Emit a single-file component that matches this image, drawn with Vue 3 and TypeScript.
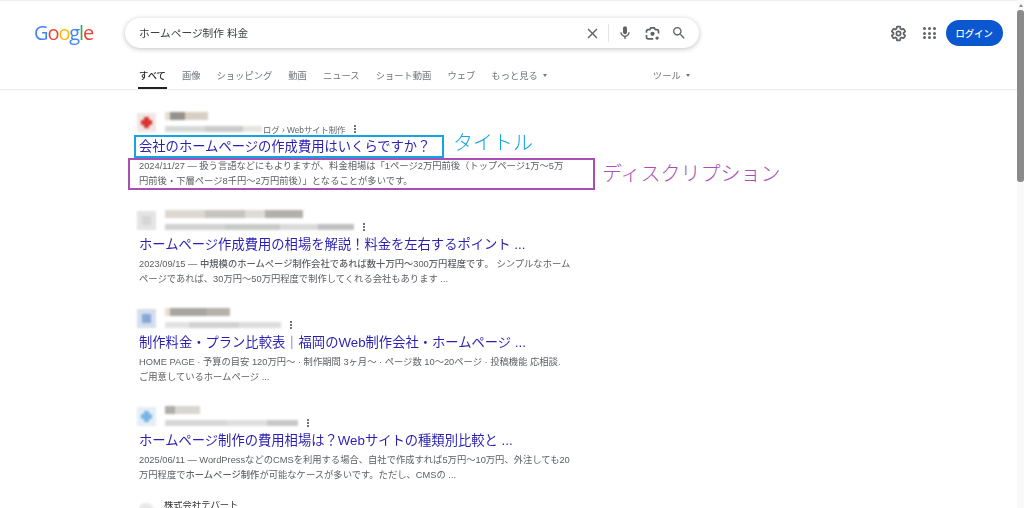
<script setup lang="ts">
type Part = { t: string; b?: boolean }
type Seg = { w: number; c: string }
interface Result {
  favicon: string[]
  cross: boolean
  name: Seg[]
  url: Seg[]
  crumb?: string
  title: string
  lines: Part[][]
}

const tabs = ['画像', 'ショッピング', '動画', 'ニュース', 'ショート動画', 'ウェブ']
const dots = Array.from({ length: 9 })

const results: Result[] = [
  {
    favicon: ['#f1e6e4', '#d8332f'],
    cross: true,
    name: [{ w: 5, c: '#e6ded4' }, { w: 15, c: '#96918c' }, { w: 23, c: '#d8cfc4' }],
    url: [{ w: 40, c: '#d4dada' }, { w: 38, c: '#cbcbcb' }, { w: 19, c: '#e6e4e0' }],
    crumb: 'ログ › Webサイト制作',
    title: '会社のホームページの作成費用はいくらですか？',
    lines: [
      [{ t: '2024/11/27 — 扱う言語などにもよりますが、料金相場は「1ページ2万円前後（トップページ1万〜5万' }],
      [{ t: '円前後・下層ページ8千円〜2万円前後）」となることが多いです。' }]
    ]
  },
  {
    favicon: ['#e4e4e4', '#d6d6d6'],
    cross: false,
    name: [{ w: 40, c: '#dcd8d0' }, { w: 40, c: '#c6c4bf' }, { w: 20, c: '#dedcd6' }, { w: 38, c: '#b2b0aa' }],
    url: [{ w: 60, c: '#d2d2d2' }, { w: 55, c: '#c8cac8' }, { w: 38, c: '#dadada' }, { w: 36, c: '#c0c0c0' }],
    title: 'ホームページ作成費用の相場を解説！料金を左右するポイント ...',
    lines: [
      [{ t: '2023/09/15 — ' }, { t: '中規模のホームページ制作会社であれば数十万円〜300万円程度です', b: true }, { t: '。 シンプルなホーム' }],
      [{ t: 'ページであれば、30万円〜50万円程度で制作してくれる会社もあります ...' }]
    ]
  },
  {
    favicon: ['#d4deec', '#86a8d8'],
    cross: false,
    name: [{ w: 5, c: '#e8ded2' }, { w: 37, c: '#a8a4a0' }, { w: 23, c: '#b6b2aa' }],
    url: [{ w: 24, c: '#e2e2e2' }, { w: 50, c: '#d0d2d0' }, { w: 42, c: '#dcdcdc' }],
    title: '制作料金・プラン比較表｜福岡のWeb制作会社・ホームページ ...',
    lines: [
      [{ t: 'HOME PAGE · 予算の目安 120万円〜 · 制作期間 3ヶ月〜 · ページ数 10〜20ページ · 投稿機能 応相談.' }],
      [{ t: 'ご用意しているホームページ ...' }]
    ]
  },
  {
    favicon: ['#e4eef6', '#78b4e6'],
    cross: true,
    name: [{ w: 10, c: '#b0aeaa' }, { w: 25, c: '#d8d6d0' }],
    url: [{ w: 62, c: '#d6d8d6' }, { w: 40, c: '#dedede' }, { w: 31, c: '#c8c8c8' }],
    title: 'ホームページ制作の費用相場は？Webサイトの種類別比較と ...',
    lines: [
      [{ t: '2025/06/11 — WordPressなどのCMSを利用する場合、自社で作成すれば5万円〜10万円、外注しても20' }],
      [{ t: '万円程度で' }, { t: 'ホームページ制作', b: true }, { t: 'が可能なケースが多いです。ただし、CMSの ...' }]
    ]
  }
]
</script>

<template>
  <div class="page">
    <div class="main">
      <header class="header">
        <div class="logo" aria-label="Google">
          <span class="lb">G</span><span class="lr">o</span><span class="ly">o</span><span class="lb">g</span><span class="lg">l</span><span class="lr">e</span>
        </div>
        <div class="search">
          <span class="query">ホームページ制作 料金</span>
          <svg class="ic close" viewBox="0 0 24 24"><path d="M19 6.410L17.590 5 12 10.590 6.410 5 5 6.410 10.590 12 5 17.590 6.410 19 12 13.410 17.590 19 19 17.590 13.410 12z" /></svg>
          <span class="sep"></span>
          <svg class="ic mic" viewBox="0 0 24 24"><path d="M12 14c1.660 0 3-1.340 3-3V5c0-1.660-1.340-3-3-3S9 3.340 9 5v6c0 1.660 1.340 3 3 3z" /><path d="M17 11c0 2.760-2.240 5-5 5s-5-2.240-5-5H5c0 3.530 2.610 6.430 6 6.920V21h2v-3.080c3.390-.49 6-3.390 6-6.920h-2z" /></svg>
          <svg class="ic lens" viewBox="0 0 24 24"><path d="M3.500 11V9a2.500 2.500 0 0 1 2.500-2.500h2L9.500 4h5L16 6.500h2A2.500 2.500 0 0 1 20.500 9v3M3.500 14v3A2.500 2.500 0 0 0 6 19.500h7" fill="none" stroke="#5f6368" stroke-width="2.400" /><circle cx="12" cy="12.500" r="3" /><circle cx="18.500" cy="18.500" r="2.400" /></svg>
          <svg class="ic find" viewBox="0 0 24 24"><path d="M15.500 14h-.79l-.28-.27C15.410 12.590 16 11.110 16 9.500 16 5.910 13.090 3 9.500 3S3 5.910 3 9.500 5.910 16 9.500 16c1.610 0 3.090-.59 4.230-1.570l.27.28v.79l5 4.990L20.490 19l-4.990-5zm-6 0C7.010 14 5 11.990 5 9.500S7.010 5 9.500 5 14 7.010 14 9.500 11.990 14 9.500 14z" /></svg>
        </div>
        <svg class="ic gear" viewBox="0 0 24 24"><path d="M19.140 12.940c.04-.3.060-.61.060-.94 0-.32-.02-.64-.07-.94l2.030-1.580c.18-.14.23-.41.120-.61l-1.920-3.320c-.12-.22-.37-.29-.59-.22l-2.390.96c-.5-.38-1.030-.7-1.620-.94l-.36-2.540c-.04-.24-.24-.41-.48-.41h-3.840c-.24 0-.43.170-.47.410l-.36 2.540c-.59.24-1.130.57-1.620.94l-2.390-.96c-.22-.08-.47 0-.59.22L2.740 8.870c-.12.21-.08.47.12.61l2.030 1.580c-.05.3-.09.63-.09.94s.02.64.07.94l-2.030 1.580c-.18.14-.23.41-.12.61l1.920 3.320c.12.22.37.29.59.22l2.390-.96c.5.38 1.030.7 1.620.94l.36 2.54c.05.24.24.41.48.41h3.840c.24 0 .44-.17.47-.41l.36-2.540c.59-.24 1.130-.56 1.620-.94l2.390.96c.22.08.47 0 .59-.22l1.920-3.320c.12-.22.070-.47-.12-.61l-2.010-1.580z" fill="none" stroke="#5f6368" stroke-width="2.400" /><circle cx="12" cy="12" r="3" fill="none" stroke="#5f6368" stroke-width="2.400" /></svg>
        <div class="apps"><i v-for="(_, i) in dots" :key="i"></i></div>
        <button class="login">ログイン</button>
      </header>

      <nav class="tabs">
        <span class="tab active">すべて</span>
        <span v-for="t in tabs" :key="t" class="tab">{{ t }}</span>
        <span class="tab">もっと見る<i class="caret"></i></span>
        <span class="tab tools">ツール<i class="caret"></i></span>
      </nav>

      <section class="results">
        <article v-for="(r, i) in results" :key="i" class="result">
          <div class="source">
            <div class="favicon" :style="{ background: r.favicon[0] }">
              <b :class="r.cross ? 'bar-h' : 'square'" :style="{ background: r.favicon[1] }"></b>
              <b v-if="r.cross" class="bar-v" :style="{ background: r.favicon[1] }"></b>
            </div>
            <div class="meta">
              <div class="blur-line name-line">
                <i v-for="(s, j) in r.name" :key="j" :style="{ width: s.w + 'px', background: s.c }"></i>
              </div>
              <div class="url-line">
                <div class="blur-line">
                  <i v-for="(s, j) in r.url" :key="j" :style="{ width: s.w + 'px', background: s.c }"></i>
                </div>
                <span v-if="r.crumb" class="crumb">{{ r.crumb }}</span>
                <span class="more"><i></i><i></i><i></i></span>
              </div>
            </div>
          </div>
          <h3 class="title">{{ r.title }}</h3>
          <p v-for="(line, k) in r.lines" :key="k" class="snippet">
            <span v-for="(p, m) in line" :key="m" :class="{ strong: p.b }">{{ p.t }}</span>
          </p>
        </article>
        <article class="result last">
          <div class="source">
            <div class="favicon round"></div>
            <div class="clipped">株式会社デパート</div>
          </div>
        </article>
      </section>

      <div class="mark mark-title"><span class="mark-label">タイトル</span></div>
      <div class="mark mark-desc"><span class="mark-label">ディスクリプション</span></div>
    </div>

    <aside class="scrollbar">
      <i class="arrow"></i>
      <i class="thumb"></i>
    </aside>
  </div>
</template>

<style>
html, body { margin: 0; background: #fff; }
</style>

<style scoped>
.page {
  display: flex;
  width: 1024px;
  height: 508px;
  overflow: hidden;
  background: #fff;
  font-family: "Liberation Sans", "Noto Sans CJK JP", sans-serif;
  color: #4d5156;
}
.main { position: relative; flex: 1; min-width: 0; border-top: 1px solid #eeeeee; box-sizing: border-box; }

.header { display: flex; align-items: center; height: 30px; padding-top: 17px; filter: blur(0.300px); }
.logo {
  width: 125px;
  padding-left: 34px;
  box-sizing: border-box;
  flex: none;
  font-family: "Open Sans", sans-serif;
  font-size: 20px;
  font-weight: 500;
  letter-spacing: -1.100px;
  line-height: 30px;
}
.lb { color: #4285f4; } .lr { color: #ea4335; } .ly { color: #fbbc05; } .lg { color: #34a853; }

.search {
  display: flex;
  align-items: center;
  flex: none;
  width: 574px;
  height: 30px;
  box-sizing: border-box;
  padding: 0 12px 0 14px;
  border-radius: 15px;
  background: #fff;
  box-shadow: 0 1px 5px rgba(32, 33, 36, 0.28);
}
.query { flex: 1; font-size: 10.700px; color: #3c4043; margin-top: -2px; }
.ic { display: block; width: 16px; height: 16px; fill: #5f6368; flex: none; }
.close { width: 17px; height: 17px; }
.sep { width: 1px; height: 18px; margin: 0 8px 0 7px; background: #e3e4e6; }
.mic { margin-right: 11px; }
.lens { margin-right: 10px; width: 17px; height: 17px; }

.gear { margin-left: 191px; width: 17px; height: 17px; }
.apps {
  display: grid;
  grid-template-columns: repeat(3, 3px);
  gap: 1.800px;
  margin-left: 16px;
}
.apps i { width: 3px; height: 3px; border-radius: 50%; background: #5f6368; }
.login {
  margin-left: 10px;
  width: 57px;
  height: 26px;
  border: 0;
  border-radius: 13px;
  background: #0b57d0;
  color: #fff;
  font: 500 9.300px "Noto Sans CJK JP", sans-serif;
}

.tabs {
  display: flex;
  align-items: flex-end;
  gap: 16px;
  height: 41px;
  padding-left: 139px;
  border-bottom: 1px solid #ebebeb;
  font-size: 9.300px;
  color: #70757a;
  filter: blur(0.300px);
}
.tab { position: relative; white-space: nowrap; line-height: 12px; padding-bottom: 7px; }
.active { color: #202124; font-weight: 500; }
.active::after {
  content: "";
  position: absolute;
  left: -1px;
  right: -1px;
  bottom: 0;
  height: 2px;
  background: #202124;
}
.caret {
  display: inline-block;
  margin-left: 5px;
  border: 2.500px solid transparent;
  border-top: 3px solid #70757a;
  border-bottom: 0;
  vertical-align: 2px;
}
.tools { margin-left: 90px; }

.results { padding: 19px 0 0 139px; width: 440px; filter: blur(0.300px); }
.result { height: 98px; }
.source { display: flex; align-items: center; height: 26px; margin-left: -2px; }
.favicon {
  position: relative;
  flex: none;
  width: 19px;
  height: 19px;
  margin: 0 9px 0 0;
  filter: blur(1.200px);
}
.favicon b { position: absolute; }
.bar-h { left: 4px; right: 4px; top: 7px; height: 5px; }
.bar-v { left: 7px; width: 5px; top: 4px; bottom: 4px; }
.square { left: 5px; top: 5px; width: 9px; height: 9px; }
.favicon.round { border-radius: 50%; background: #e8e8e8; width: 16px; height: 16px; margin: 2px 10px 0 1px; align-self: flex-start; }
.meta { display: flex; flex-direction: column; gap: 6px; min-width: 0; }
.blur-line { display: flex; height: 6px; filter: blur(1.200px); flex: none; }
.blur-line i { display: block; height: 100%; }
.name-line { height: 8px; }
.url-line { display: flex; align-items: center; height: 6px; }
.crumb { font-size: 8.300px; color: #5f6368; white-space: nowrap; margin-left: 1px; }
.more { display: flex; flex-direction: column; gap: 1.200px; margin-left: 9px; }
.more i { width: 2px; height: 2px; border-radius: 50%; background: #444; }
.title {
  margin: 2px 0 2px;
  font-size: 13.300px;
  font-weight: 400;
  line-height: 20px;
  color: #2a1fb2;
  white-space: nowrap;
}
.snippet { margin: 0; font-size: 9.300px; line-height: 15px; white-space: nowrap; color: #5c6065; }
.strong { font-weight: 500; }
.clipped { font-size: 9.300px; line-height: 12px; color: #333; align-self: flex-start; margin-top: -2px; filter: blur(0.400px); }
.last { height: 10px; overflow: hidden; }

.mark { position: absolute; box-sizing: border-box; border-style: solid; border-width: 2px; }
.mark-title { left: 134px; top: 134px; width: 310px; height: 23px; border-color: #12a5e2; }
.mark-desc { left: 128px; top: 157px; width: 467px; height: 32px; border-color: #a94fb3; }
.mark-label { position: absolute; white-space: nowrap; font-size: 20px; line-height: 24px; font-family: "Noto Sans CJK JP", sans-serif; font-weight: 300; }
.mark-title .mark-label { left: 317px; top: -7px; color: #12a5e2; }
.mark-desc .mark-label { left: 472px; top: 1px; color: #a94fb3; }

.scrollbar { position: relative; flex: none; width: 7px; background: #f9f9f9; display: flex; flex-direction: column; align-items: center; }
.arrow { margin-top: 4px; border: 2.500px solid transparent; border-bottom: 3px solid #8a8a8a; border-top: 0; }
.thumb { width: 100%; height: 172px; margin-top: 3px; background: #8a8a8a; border-radius: 3px; }
</style>
